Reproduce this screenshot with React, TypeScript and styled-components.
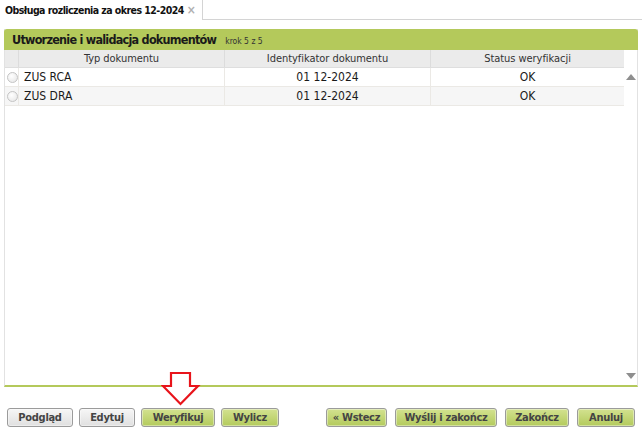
import React from "react";
import styled, { createGlobalStyle } from "styled-components";

const Global = createGlobalStyle`
  html, body { margin: 0; padding: 0; background: #fff; }
  body { font-family: "DejaVu Sans Condensed", "DejaVu Sans", sans-serif; color: #222; }
`;

const Page = styled.div`
  width: 642px;
  height: 430px;
  display: flex;
  flex-direction: column;
  overflow: hidden;
`;

const TabBar = styled.div`
  height: 19px;
  display: flex;
  border-bottom: 1px solid #d4d4d4;
`;

const Tab = styled.div`
  width: 203px;
  height: 20px;
  box-sizing: border-box;
  padding: 0 0 0 5px;
  display: flex;
  align-items: center;
  gap: 3px;
  background: #fff;
  border-right: 1px solid #d4d4d4;
  font-weight: bold;
  font-size: 10.5px;
  letter-spacing: -0.55px;
  white-space: nowrap;
  color: #111;
  margin-bottom: -1px;
`;

const Close = styled.span`
  color: #b0b0b0;
  font-size: 12px;
  font-weight: bold;
  letter-spacing: 0;
`;

const Body = styled.div`
  padding: 9px 4px 0 4px;
  display: flex;
  flex-direction: column;
`;

const Panel = styled.div`
  height: 358px;
  box-sizing: border-box;
  display: flex;
  flex-direction: column;
  border-left: 1px solid #e2e2e2;
  border-right: 1px solid #e2e2e2;
  border-bottom: 2px solid #b4c95b;
`;

const PanelHeader = styled.div`
  height: 21px;
  margin: 0 -1px;
  background: #b4c95b;
  border-radius: 3px 3px 0 0;
  display: flex;
  align-items: center;
  padding-left: 8px;
  gap: 9px;
  white-space: nowrap;
`;

const Title = styled.span`
  font-weight: bold;
  font-size: 12.5px;
  letter-spacing: -0.75px;
  color: #1a1a1a;
`;

const Step = styled.span`
  font-size: 8.5px;
  color: #333;
  padding-top: 2px;
`;

const GridArea = styled.div`
  flex: 1;
  display: flex;
  min-height: 0;
`;

const Table = styled.div`
  flex: 1;
  display: flex;
  flex-direction: column;
`;

const COLS = "14px 206px 206px 193px";

const HeaderRow = styled.div`
  display: grid;
  grid-template-columns: ${COLS};
  height: 17px;
  background: #ebebeb;
  border-bottom: 1px solid #dedede;
`;

const HeadCell = styled.div`
  font-size: 11px;
  letter-spacing: -0.05px;
  color: #333;
  display: flex;
  align-items: center;
  justify-content: center;
  border-right: 1px solid #dcdcdc;
  white-space: nowrap;
  &:last-child { border-right: none; }
`;

const Row = styled.div<{ $alt?: boolean }>`
  display: grid;
  grid-template-columns: ${COLS};
  height: 18px;
  background: ${(p) => (p.$alt ? "#f6f6f6" : "#ffffff")};
  border-bottom: 1px solid #ebe9e5;
`;

const Cell = styled.div<{ $align?: "left" | "center" }>`
  font-size: 12px;
  color: #1a1a1a;
  display: flex;
  align-items: center;
  white-space: nowrap;
  justify-content: ${(p) => (p.$align === "center" ? "center" : "flex-start")};
  padding-left: ${(p) => (p.$align === "center" ? "0" : "5px")};
  border-right: 1px solid #ebe9e5;
  &:last-child { border-right: none; }
`;

const RadioCell = styled.div`
  display: flex;
  align-items: center;
  justify-content: center;
  border-right: 1px solid #ebe9e5;
`;

const Radio = styled.span`
  width: 9px;
  height: 9px;
  border-radius: 50%;
  border: 1px solid #c4c4c4;
  background: radial-gradient(circle at 40% 35%, #ffffff, #e4e4e4);
  margin-left: 2px;
`;

const Scroll = styled.div`
  width: 14px;
  display: flex;
  flex-direction: column;
  justify-content: space-between;
  align-items: center;
  padding: 24px 0 6px;
`;

const Arrow = styled.span<{ $down?: boolean }>`
  width: 0;
  height: 0;
  border-left: 5px solid transparent;
  border-right: 5px solid transparent;
  ${(p) =>
    p.$down
      ? "border-top: 6px solid #8e8e8e;"
      : "border-bottom: 6px solid #8e8e8e;"}
`;

const ButtonBar = styled.div`
  display: flex;
  justify-content: space-between;
  padding: 21px 3px 0 3px;
  position: relative;
`;

const Group = styled.div<{ $gap: number }>`
  display: flex;
  gap: ${(p) => p.$gap}px;
`;

const Button = styled.button<{ $green?: boolean; $width: number }>`
  width: ${(p) => p.$width}px;
  height: 19px;
  box-sizing: border-box;
  padding: 0;
  border: 1px solid #9b9b9b;
  border-radius: 3px;
  font-family: inherit;
  font-weight: bold;
  font-size: 11px;
  letter-spacing: -0.3px;
  white-space: nowrap;
  color: #444;
  background: ${(p) =>
    p.$green
      ? "linear-gradient(#d3e290, #b3ca5c)"
      : "linear-gradient(#f6f6f6, #e0e0e0)"};
  display: flex;
  align-items: center;
  justify-content: center;
  box-shadow: inset 0 0 0 1px rgba(255, 255, 255, 0.4);
`;

const ArrowMark = styled.svg`
  position: absolute;
  left: 157px;
  top: -16px;
`;

const rows = [
  { typ: "ZUS RCA", id: "01 12-2024", status: "OK" },
  { typ: "ZUS DRA", id: "01 12-2024", status: "OK" },
];

export default function App() {
  return (
    <Page>
      <Global />
      <TabBar>
        <Tab>
          Obsługa rozliczenia za okres 12-2024 <Close>×</Close>
        </Tab>
      </TabBar>
      <Body>
        <Panel>
          <PanelHeader>
            <Title>Utworzenie i walidacja dokumentów</Title>
            <Step>krok 5 z 5</Step>
          </PanelHeader>
          <GridArea>
            <Table>
              <HeaderRow>
                <HeadCell />
                <HeadCell>Typ dokumentu</HeadCell>
                <HeadCell>Identyfikator dokumentu</HeadCell>
                <HeadCell>Status weryfikacji</HeadCell>
              </HeaderRow>
              {rows.map((r, i) => (
                <Row key={r.typ} $alt={i % 2 === 1}>
                  <RadioCell>
                    <Radio />
                  </RadioCell>
                  <Cell>{r.typ}</Cell>
                  <Cell $align="center">{r.id}</Cell>
                  <Cell $align="center">{r.status}</Cell>
                </Row>
              ))}
            </Table>
            <Scroll>
              <Arrow />
              <Arrow $down />
            </Scroll>
          </GridArea>
        </Panel>
        <ButtonBar>
          <ArrowMark width="40" height="36" viewBox="0 0 40 36">
            <path
              d="M10 2 H29 V15 H37 L19.5 33 L2 15 H10 Z"
              fill="#fff"
              stroke="#e8141b"
              strokeWidth="2.2"
              strokeLinejoin="miter"
            />
          </ArrowMark>
          <Group $gap={6}>
            <Button $width={66}>Podgląd</Button>
            <Button $width={56}>Edytuj</Button>
            <Button $green $width={74}>Weryfikuj</Button>
            <Button $green $width={58}>Wylicz</Button>
          </Group>
          <Group $gap={8}>
            <Button $green $width={61}>« Wstecz</Button>
            <Button $green $width={102}>Wyślij i zakończ</Button>
            <Button $green $width={64}>Zakończ</Button>
            <Button $green $width={58}>Anuluj</Button>
          </Group>
        </ButtonBar>
      </Body>
    </Page>
  );
}
